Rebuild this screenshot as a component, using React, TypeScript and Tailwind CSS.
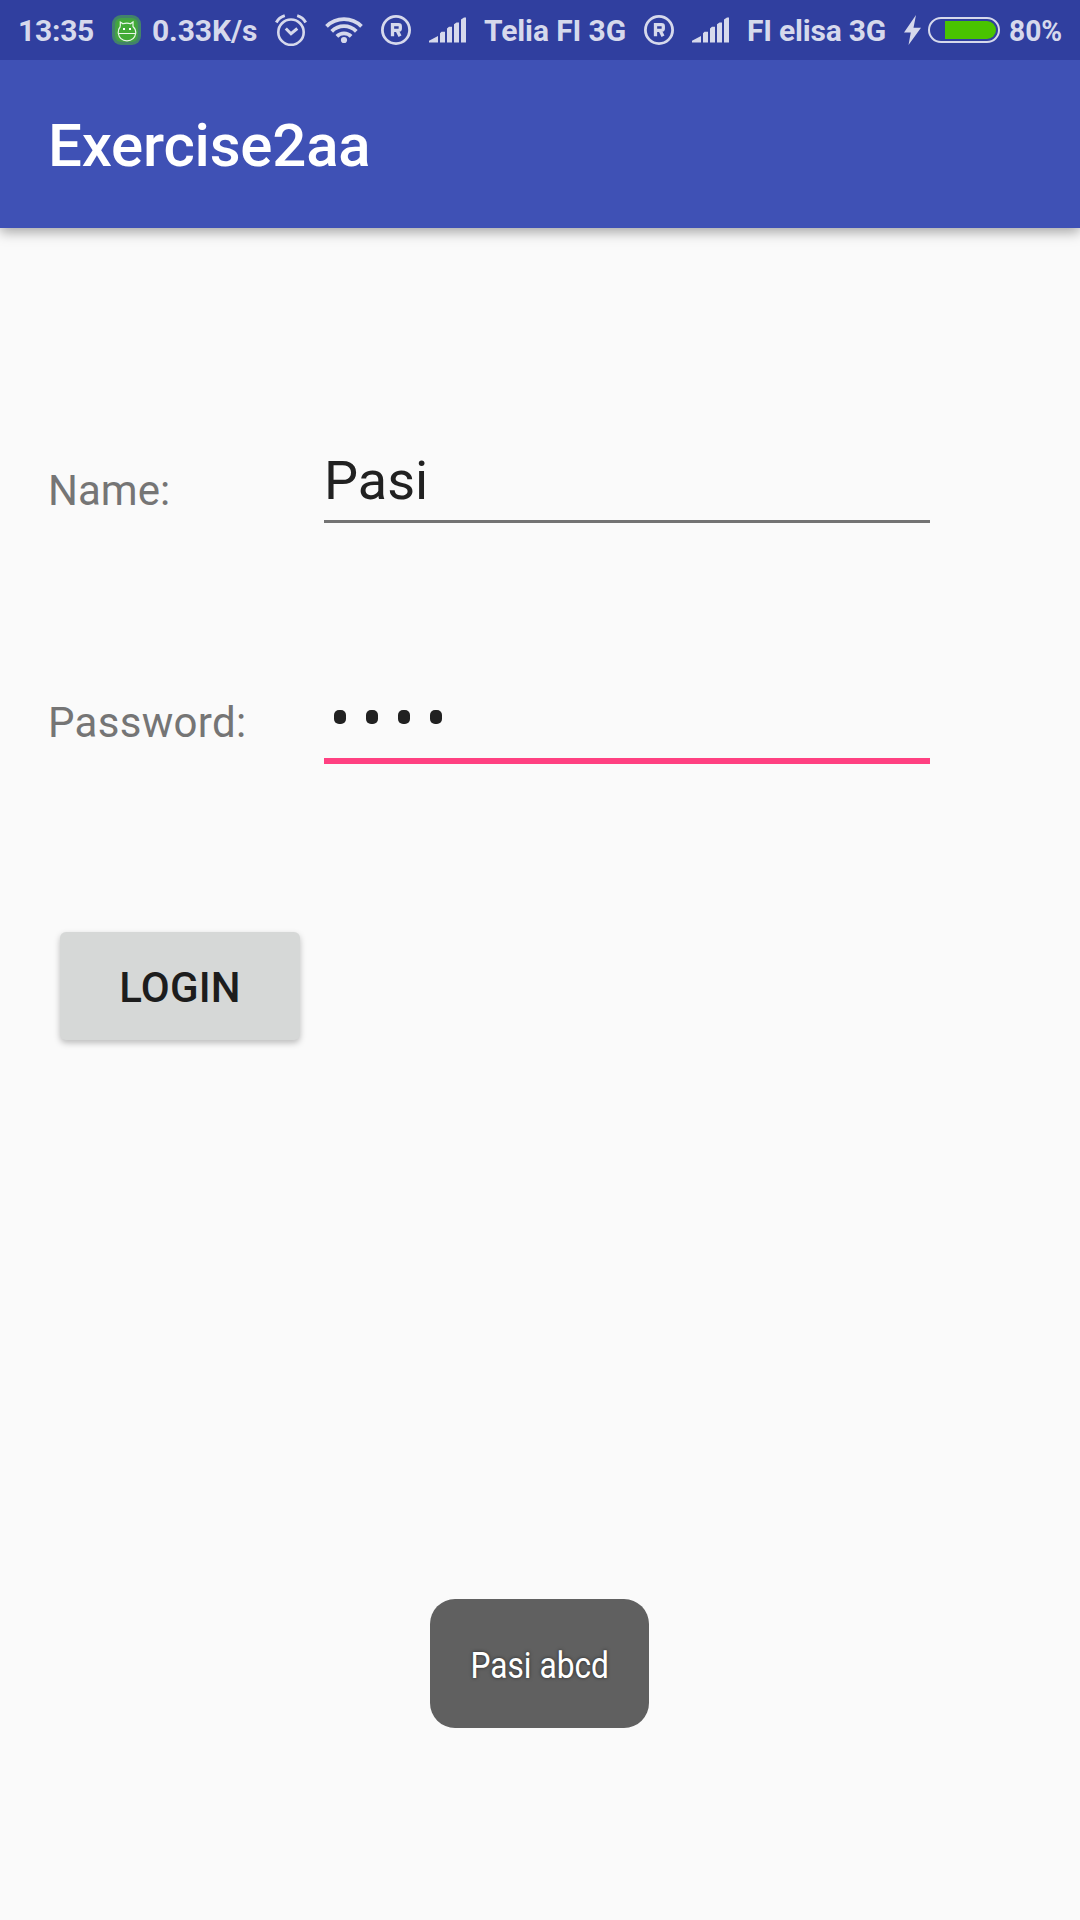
import React from "react";

const INK = "#d6d9ec";

function AndroidBadge() {
  return (
    <svg className="ml-[19px] h-[30px] w-[29px] shrink-0" viewBox="0 0 29 30" fill="none">
      <rect width="29" height="30" rx="9" fill="#42826b" />
      <rect x="3" y="3" width="23" height="24" rx="6" fill="#43a047" />
      <rect x="5" y="5" width="19" height="20" rx="4" fill="#42ab36" />
      <path
        d="M8.300 11.500V7L11 8.800Q15 7.500 18.500 8.800L21 7V11.500Q23.800 14 23.800 18Q22.500 25.800 15 25.800Q7.500 25.800 6.200 18Q6.200 14 8.300 11.500M6.200 18.500H24"
        stroke="#e8f5e9"
        strokeWidth="1.2"
      />
      <rect x="11" y="13" width="2" height="2" fill="#fff" />
      <rect x="17" y="13" width="2" height="2" fill="#fff" />
    </svg>
  );
}

function AlarmIcon() {
  return (
    <svg className="ml-[17px] h-[32px] w-[32px] shrink-0" viewBox="0 0 32 32" fill="none" stroke={INK}>
      <circle cx="16" cy="18.200" r="12.700" strokeWidth="2.600" />
      <path d="M10.800 14.500L16 19.700L22.300 14.500" strokeWidth="3" />
      <path d="M1.300 8.500Q4 3.300 9.800 1.600M30.700 8.500Q28 3.300 22.200 1.600" strokeWidth="3" />
    </svg>
  );
}

function WifiIcon() {
  return (
    <svg className="ml-[18px] h-[28px] w-[38px] shrink-0" viewBox="0 0 38 28" fill="none" stroke={INK} strokeWidth="3.800">
      <path d="M1.500 10.300A24.800 24.800 0 0 1 36.500 10.300" />
      <path d="M6.700 15.300A17.400 17.400 0 0 1 31.300 15.300" />
      <path d="M11.900 20.300A10 10 0 0 1 26.100 20.300" />
      <circle cx="19" cy="24" r="3.100" fill={INK} stroke="none" />
    </svg>
  );
}

function RoamingIcon() {
  return (
    <svg className="ml-[18px] h-[30px] w-[30px] shrink-0" viewBox="0 0 30 30" fill="none" stroke={INK} strokeWidth="2.800">
      <circle cx="15" cy="15" r="13.600" />
      <path d="M11.500 21.200V9.700H17.500Q19.300 9.700 19.300 11.200V13.500Q19.300 15.300 17.500 15.300H11.500M16 15.300L19 21.200" strokeWidth="3.300" />
    </svg>
  );
}

function SignalIcon() {
  return (
    <svg className="ml-[18px] h-[26px] w-[37px] shrink-0" viewBox="0 0 37 26" fill={INK}>
      <path d="M0 25.500V23.800L9 19V25.500ZM11 25.500V16.200L12.500 14.800H16V25.500ZM18 25.500V11.500L20 9.800H23V25.500ZM25 25.500V7.200L27.500 5.500H30V25.500ZM32 25.500V2.500L35 .5H37V25.500Z" />
    </svg>
  );
}

function Battery() {
  return (
    <>
      <svg className="ml-[18px] h-[30px] w-[17px] shrink-0" viewBox="0 0 17 30" fill={INK}>
        <path d="M12 0L0 17.500H6.800L4.500 30L17 12.800H9.500Z" />
      </svg>
      <div className="ml-[7px] flex h-[26px] w-[72px] shrink-0 items-center rounded-full border-2 border-[#d6d9ec] pl-[15px]">
        <div className="h-[18px] w-[51px] rounded-r-full bg-[#49c400]" />
      </div>
    </>
  );
}

function StatusBar() {
  return (
    <header className="flex h-[60px] items-center bg-[#303f9f] pl-[18px] text-[30px] leading-[60px] font-bold whitespace-nowrap text-[#d6d9ec]">
      <span className="w-[75px] pt-px tracking-[-0.25px]">13:35</span>
      <AndroidBadge />
      <span className="ml-[11px] w-[106px] pt-px tracking-[-0.1px]">0.33K/s</span>
      <AlarmIcon />
      <WifiIcon />
      <RoamingIcon />
      <SignalIcon />
      <span className="ml-[18px] w-[142px] pt-px tracking-[-0.1px]">Telia FI 3G</span>
      <RoamingIcon />
      <SignalIcon />
      <span className="ml-[18px] w-[139px] pt-px tracking-[-0.22px]">FI elisa 3G</span>
      <Battery />
      <span className="ml-[9px] w-[54px] origin-left scale-x-[0.94] pt-px">80%</span>
    </header>
  );
}

export default function App() {
  return (
    <div className="flex h-[1920px] w-[1080px] flex-col overflow-hidden bg-[#fafafa] font-['Roboto',sans-serif]">
      <StatusBar />
      <div className="flex h-[168px] items-center bg-[#3f51b5] pl-12 shadow-[0_4px_12px_rgba(0,0,0,0.35)] [clip-path:inset(0_0_-30px_0)]">
        <h1 className="pt-[4px] text-[60px] font-medium tracking-[-0.2px] text-white">Exercise2aa</h1>
      </div>
      <main className="flex flex-1 flex-col">
        <div className="mt-[212px] flex h-[83px]">
          <label className="w-[276px] pt-[23px] pl-12 text-[42px] leading-[56px] text-[#757575]">Name:</label>
          <div className="ml-12 w-[606px] border-b-[3px] border-[#737373] text-[54px] leading-[82px] text-[#212121]">Pasi</div>
        </div>
        <div className="mt-[151px] flex h-[90px]">
          <label className="w-[276px] pt-[21px] pl-12 text-[42px] leading-[56px] tracking-[0.3px] text-[#757575]">Password:</label>
          <div className="ml-12 flex w-[606px] gap-5 border-b-[6px] border-[#ff4081] pt-[36px] pl-[10px]">
            <span className="h-[14px] w-3 rounded-[5px] bg-[#212121]" />
            <span className="h-[14px] w-3 rounded-[5px] bg-[#212121]" />
            <span className="h-[14px] w-3 rounded-[5px] bg-[#212121]" />
            <span className="h-[14px] w-3 rounded-[5px] bg-[#212121]" />
          </div>
        </div>
        <button className="mt-[168px] ml-[60px] h-[108px] w-[240px] rounded-[6px] bg-[#d6d8d7] pt-[2px] text-[42px] font-medium tracking-[0.2px] text-[#1d1d1d] shadow-[0_3px_6px_rgba(0,0,0,0.25)]">
          LOGIN
        </button>
        <div className="mt-[559px] ml-[430px] flex h-[129px] w-[219px] items-center justify-center rounded-[25px] bg-[#606060]">
          <span className="scale-x-[0.88] pt-[4px] text-[36px] whitespace-nowrap text-white [text-shadow:0_0_4px_rgba(0,0,0,0.6)]">
            Pasi abcd
          </span>
        </div>
      </main>
    </div>
  );
}
